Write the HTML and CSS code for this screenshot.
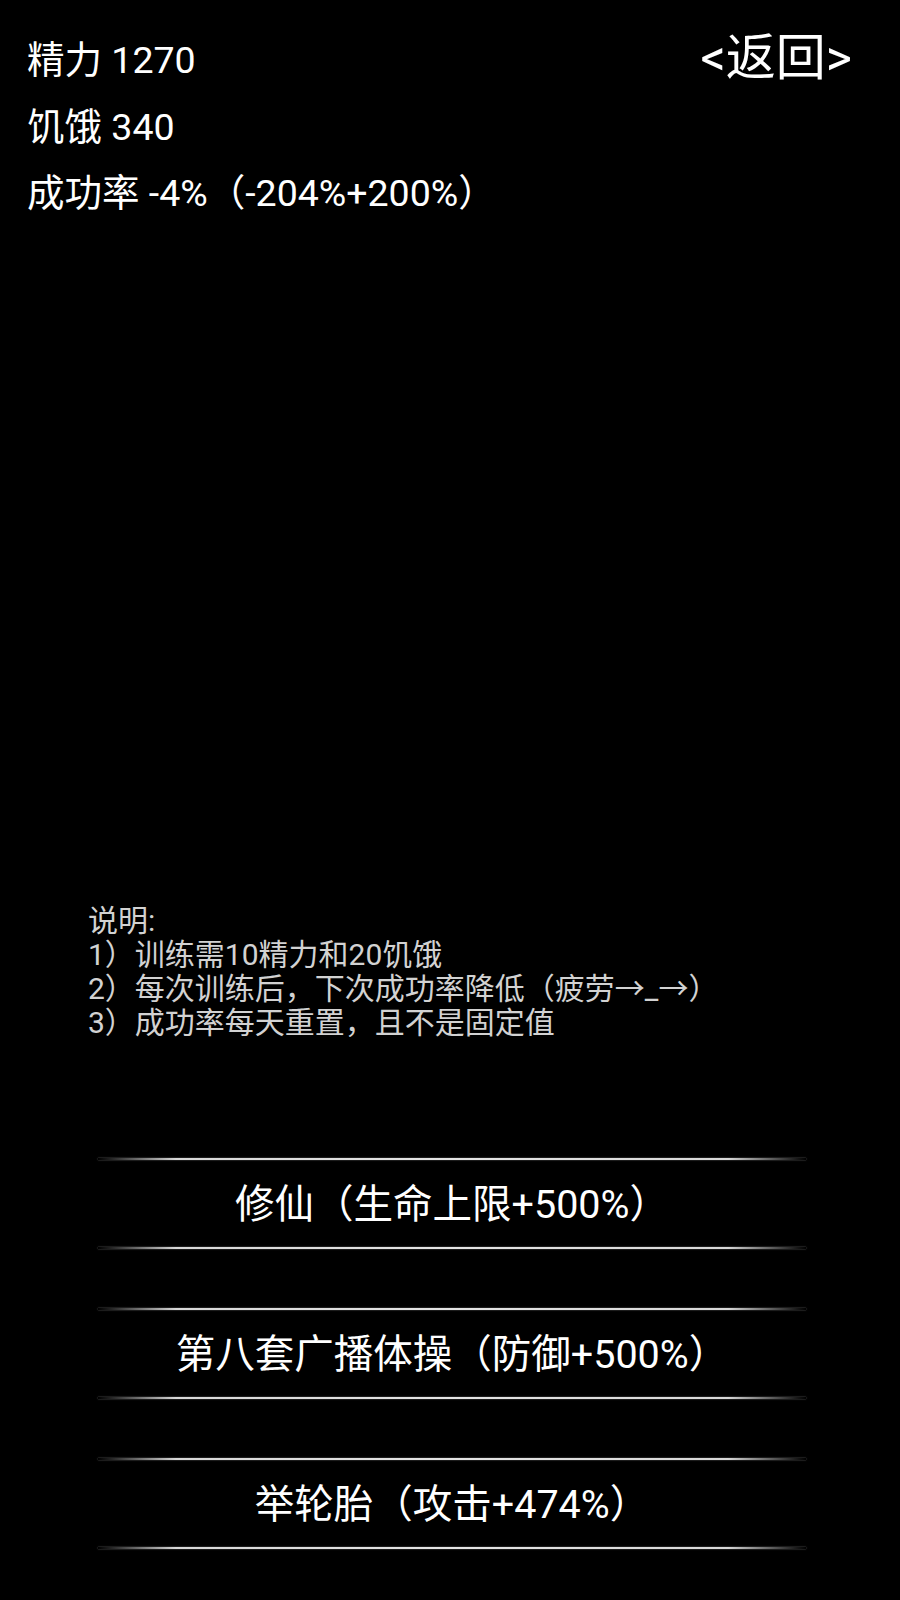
FILE: index.html
```html
<!DOCTYPE html>
<html lang="zh-CN">
<head>
<meta charset="utf-8">
<title>训练</title>
<link rel="stylesheet" href="styles.css">
</head>
<body>
<div class="page">
  <header class="top">
    <div class="stats">
      <div class="stat">精力 1270</div>
      <div class="stat">饥饿 340</div>
      <div class="stat">成功率 -4%（-204%+200%）</div>
    </div>
    <div class="back">&lt;返回&gt;</div>
  </header>
  <section class="desc">
    <div class="desc-line">说明:</div>
    <div class="desc-line">1）训练需10精力和20饥饿</div>
    <div class="desc-line">2）每次训练后，下次成功率降低（疲劳→_→）</div>
    <div class="desc-line">3）成功率每天重置，且不是固定值</div>
  </section>
  <nav class="actions">
    <div class="btn"><span class="line"></span><span class="label">修仙（生命上限+500%）</span><span class="line"></span></div>
    <div class="btn"><span class="line"></span><span class="label">第八套广播体操（防御+500%）</span><span class="line"></span></div>
    <div class="btn"><span class="line"></span><span class="label">举轮胎（攻击+474%）</span><span class="line"></span></div>
  </nav>
</div>
</body>
</html>
```

FILE: styles.css
```css
html, body {
  margin: 0;
  padding: 0;
  background: #000;
}

.page {
  width: 900px;
  height: 1600px;
  display: flex;
  flex-direction: column;
  background: #000;
  color: #fff;
  font-family: Roboto, "Noto Sans CJK SC", sans-serif;
  overflow: hidden;
}

.top {
  display: flex;
  justify-content: space-between;
  align-items: flex-start;
  padding: 28px 48px 0 27px;
}

.stats {
  margin-top: -1px;
}

.stat {
  font-size: 37.5px;
  line-height: 66.5px;
  white-space: nowrap;
}

.back {
  font-size: 50px;
  line-height: 60px;
  white-space: nowrap;
}

.desc {
  margin-top: 677px;
  padding-left: 88px;
  color: #d2d2d2;
  font-size: 30px;
  line-height: 34px;
}

.desc-line {
  white-space: nowrap;
}

.actions {
  margin-top: 118px;
  display: flex;
  flex-direction: column;
  gap: 59px;
  align-items: center;
}

.btn {
  width: 708px;
  display: flex;
  flex-direction: column;
  align-items: stretch;
  margin-left: 4px;
}

.line {
  display: block;
  height: 2px;
  background: linear-gradient(to right, rgba(220,220,220,0) 0%, #d8d8d8 11%, #e4e4e4 50%, #d8d8d8 89%, rgba(220,220,220,0) 100%);
  box-shadow: 0 0 1.5px rgba(160,160,160,0.9);
}

.label {
  box-sizing: border-box;
  display: flex;
  justify-content: center;
  align-items: center;
  height: 87px;
  padding-bottom: 5px;
  font-size: 39.5px;
  white-space: nowrap;
}
```
